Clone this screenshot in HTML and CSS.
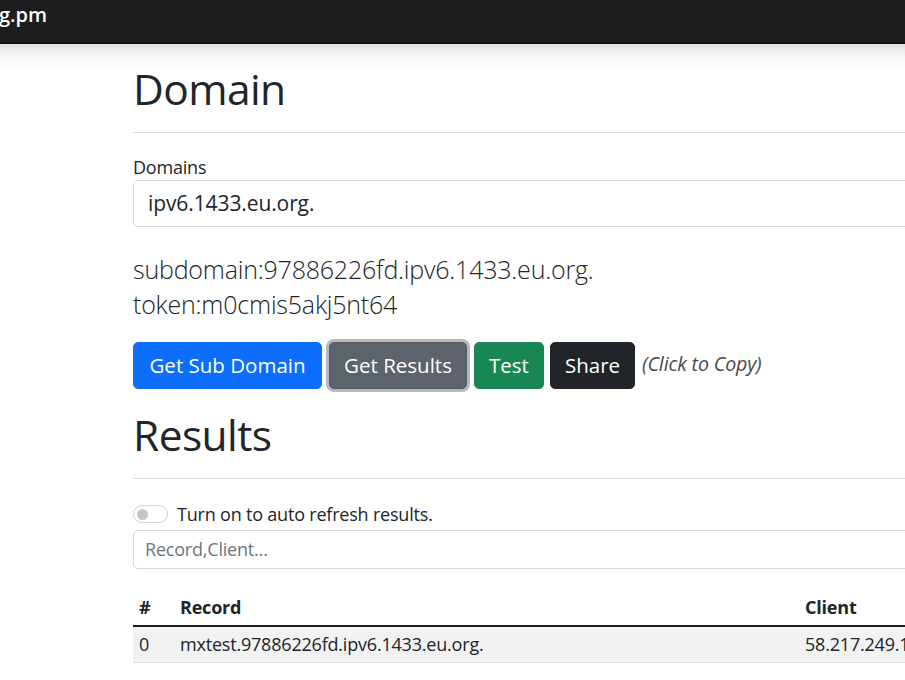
FILE: index.html
```html
<!DOCTYPE html>
<html lang="en">
<head>
<meta charset="utf-8">
<title>DNSLog</title>
<link rel="stylesheet" href="styles.css">
</head>
<body>
<nav class="navbar"><span class="brand">g.pm</span></nav>
<div class="shadow"></div>
<main class="container">
  <h1 class="title">Domain</h1>
  <hr class="rule">
  <label class="label" for="domain">Domains</label>
  <div class="input big" id="domain">ipv6.1433.eu.org.</div>
  <p class="lead">subdomain:97886226fd.ipv6.1433.eu.org.</p>
  <p class="lead">token:m0cmis5akj5nt64</p>
  <div class="buttons">
    <button class="btn blue">Get Sub Domain</button>
    <button class="btn gray focus">Get Results</button>
    <button class="btn green">Test</button>
    <button class="btn dark">Share</button>
    <span class="copy">(Click to Copy)</span>
  </div>
  <h1 class="title results">Results</h1>
  <hr class="rule">
  <div class="switch-row">
    <span class="switch"><span class="knob"></span></span>
    <span class="switch-label">Turn on to auto refresh results.</span>
  </div>
  <div class="input search"><span class="placeholder">Record,Client...</span></div>
  <table class="table">
    <thead>
      <tr><th class="c-num">#</th><th class="c-rec">Record</th><th>Client</th></tr>
    </thead>
    <tbody>
      <tr><td class="c-num">0</td><td class="c-rec">mxtest.97886226fd.ipv6.1433.eu.org.</td><td>58.217.249.142</td></tr>
    </tbody>
  </table>
</main>
</body>
</html>
```
FILE: styles.css
```css
html, body {
  margin: 0;
  padding: 0;
  background: #fff;
  overflow: hidden;
}
body {
  font-family: "Open Sans", "Noto Sans", sans-serif;
  color: #212529;
  width: 905px;
  height: 680px;
}
.navbar {
  height: 42px;
  background: #1c1d1f;
  border-bottom: 2px solid #0f1011;
  display: flex;
  align-items: flex-start;
}
.brand {
  color: #fff;
  font-size: 20px;
  font-weight: 600;
  line-height: 30px;
  margin-left: -1px;
}
.shadow {
  height: 24px;
  background: linear-gradient(#e2e2e2, #f6f6f6 50%, #fff);
  margin-bottom: -24px;
}
.container {
  position: relative;
  margin-left: 133px;
  width: 1100px;
}
.title {
  font-weight: 400;
  font-size: 42.5px;
  line-height: 52px;
  margin: 0;
  padding-top: 19px;
  letter-spacing: -0.6px;
}
.title.results {
  padding-top: 20px;
}
.rule {
  border: 0;
  border-top: 1px solid #dcdcdc;
  margin: 17px 0 0;
}
.label {
  display: block;
  font-size: 18px;
  line-height: 24px;
  margin-top: 22px;
  letter-spacing: -0.2px;
}
.input {
  border: 1px solid #d6d9dc;
  border-radius: 5px;
  box-sizing: border-box;
  background: #fff;
}
.input.big {
  height: 47px;
  margin-top: 1px;
  font-size: 21px;
  line-height: 45px;
  padding-left: 14px;
  letter-spacing: -0.1px;
}
.lead {
  margin: 0;
  font-size: 25px;
  font-weight: 300;
  line-height: 35px;
  letter-spacing: -0.2px;
}
.lead:first-of-type {
  margin-top: 25px;
}
.buttons {
  display: flex;
  align-items: center;
  margin-top: 20px;
  gap: 6px;
}
.btn {
  font-family: inherit;
  font-size: 20.5px;
  line-height: 27px;
  color: #fff;
  border: 1px solid transparent;
  border-radius: 5px;
  height: 47px;
  padding: 0 8px;
  letter-spacing: 0;
}
.blue { background: #0d6efd; border-color: #0d6efd; width: 189px; }
.gray { background: #5c636a; border-color: #565e64; width: 138px; margin-left: 1px; }
.focus { box-shadow: 0 0 0 3px #b6b9bd; }
.green { background: #198754; border-color: #198754; width: 70px; margin-left: 1px; }
.dark { background: #212529; border-color: #212529; width: 85px; }
.copy {
  font-style: italic;
  font-size: 19.5px;
  color: #444a50;
  margin-left: 1px;
  margin-top: -4px;
  letter-spacing: -0.1px;
}
.switch-row {
  display: flex;
  align-items: center;
  margin-top: 23px;
  height: 24px;
}
.switch {
  width: 35px;
  height: 18px;
  border: 1px solid #cfd3d7;
  border-radius: 10px;
  box-sizing: border-box;
  display: flex;
  align-items: center;
  padding-left: 3px;
}
.knob {
  width: 11px;
  height: 11px;
  border-radius: 50%;
  background: #c3c5c7;
}
.switch-label {
  font-size: 18px;
  margin-left: 9px;
  letter-spacing: -0.2px;
}
.input.search {
  height: 39px;
  margin-top: 4px;
  padding-left: 11px;
  font-size: 18px;
  line-height: 37px;
}
.placeholder { color: #6c757d; letter-spacing: -0.2px; }
.table {
  border-collapse: collapse;
  width: 1100px;
  margin-top: 20px;
  font-size: 18px;
}
.table th {
  text-align: left;
  font-weight: 700;
  padding: 6px 6px 6px;
  line-height: 24px;
  border-bottom: 2px solid #1c1d1f;
  letter-spacing: -0.2px;
}
.table td {
  padding: 5px 6px 6px;
  line-height: 24px;
  background: #f2f2f2;
  border-bottom: 1px solid #dee2e6;
  letter-spacing: -0.2px;
}
.c-num { width: 29px; }
.c-rec { width: 613px; }
```
